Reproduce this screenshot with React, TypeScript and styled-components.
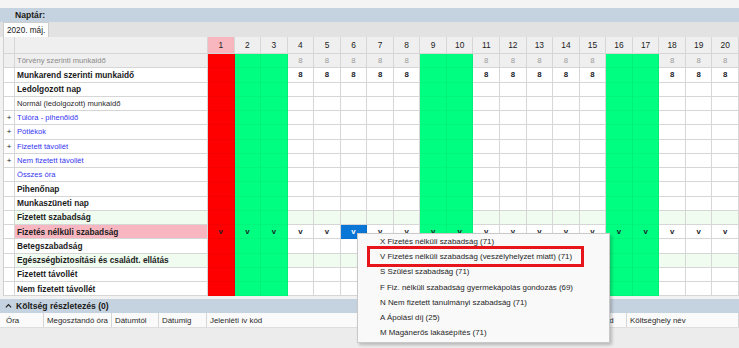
import React from "react";
import styled, { createGlobalStyle } from "styled-components";

const GlobalStyle = createGlobalStyle`
  html, body {
    margin: 0;
    padding: 0;
  }
  body {
    width: 739px;
    height: 348px;
    overflow: hidden;
    background: #f2f2f2;
    font-family: "Liberation Sans", Arial, sans-serif;
    color: #1b1b1b;
  }
`;

type DayKind = "holiday" | "weekend" | "work";
type Day = { n: number; kind: DayKind };

const days: Day[] = Array.from({ length: 20 }, (_, i) => {
  const n = i + 1;
  const kind: DayKind =
    n === 1 ? "holiday" : [2, 3, 9, 10, 16, 17].includes(n) ? "weekend" : "work";
  return { n, kind };
});

type RowKind = "law" | "bold" | "normal" | "link";
type Row = {
  label: string;
  kind: RowKind;
  plus?: boolean;
  tint?: "green" | "pink";
  values?: "law" | "schedule" | "v";
};

const rows: Row[] = [
  { label: "Törvény szerinti munkaidő", kind: "law", values: "law" },
  { label: "Munkarend szerinti munkaidő", kind: "bold", values: "schedule" },
  { label: "Ledolgozott nap", kind: "bold" },
  { label: "Normál (ledolgozott) munkaidő", kind: "normal" },
  { label: "Túlóra - pihenőidő", kind: "link", plus: true },
  { label: "Pótlékok", kind: "link", plus: true },
  { label: "Fizetett távollét", kind: "link", plus: true },
  { label: "Nem fizetett távollét", kind: "link", plus: true },
  { label: "Összes óra", kind: "link" },
  { label: "Pihenőnap", kind: "bold" },
  { label: "Munkaszüneti nap", kind: "bold" },
  { label: "Fizetett szabadság", kind: "bold", tint: "green" },
  { label: "Fizetés nélküli szabadság", kind: "bold", tint: "pink", values: "v" },
  { label: "Betegszabadság", kind: "bold" },
  { label: "Egészségbiztosítási és családt. ellátás", kind: "bold", tint: "green" },
  { label: "Fizetett távollét", kind: "bold" },
  { label: "Nem fizetett távollét", kind: "bold" },
];

const menuItems = [
  "X Fizetés nélküli szabadság (71)",
  "V Fizetés nélküli szabadság (veszélyhelyzet miatt) (71)",
  "S Szülési szabadság (71)",
  "F Fiz. nélküli szabadság gyermekápolás gondozás (69)",
  "N Nem fizetett tanulmányi szabadság (71)",
  "A Ápolási díj (25)",
  "M Magánerős lakásépítés (71)",
];

const costColumns = [
  { title: "Óra", width: 41 },
  { title: "Megosztandó óra", width: 68 },
  { title: "Dátumtól", width: 47 },
  { title: "Dátumig", width: 48 },
  { title: "Jelenléti ív kód", width: 348 },
  { title: "Költséghely kód", width: 72 },
  { title: "Költséghely név", width: 112 },
];

const SELECTED_DAY = 6;
const SELECTED_ROW = 12;

function cellBg(day: Day, row: Row): string {
  if (day.kind === "holiday") return "#ff0000";
  if (day.kind === "weekend") return "#00ff80";
  if (row.kind === "law") return "#efefef";
  if (row.tint === "green") return "#effcef";
  return "#ffffff";
}

function cellValue(day: Day, row: Row): string {
  if (row.values === "v") return "v";
  if (day.kind !== "work") return "";
  if (row.values === "law" || row.values === "schedule") return "8";
  return "";
}

export default function App() {
  return (
    <Page>
      <GlobalStyle />
      <TopStrip />
      <SectionBar>Naptár:</SectionBar>
      <TabBar>
        <Tab>2020. máj.</Tab>
      </TabBar>
      <Calendar>
        <HeaderCell />
        <HeaderCell />
        {days.map((d) => (
          <HeaderCell key={d.n} $holiday={d.kind === "holiday"}>
            {d.n}
          </HeaderCell>
        ))}
        {rows.map((row, r) => (
          <React.Fragment key={r}>
            <PlusCell $grey={row.kind === "law"}>{row.plus ? "+" : ""}</PlusCell>
            <LabelCell $kind={row.kind} $tint={row.tint}>
              {row.label}
            </LabelCell>
            {days.map((d) => {
              const selected = r === SELECTED_ROW && d.n === SELECTED_DAY;
              return (
                <DayCell
                  key={d.n}
                  $bg={selected ? "#0a76d6" : cellBg(d, row)}
                  $coloured={d.kind !== "work" || selected}
                  $muted={row.values === "law"}
                  $light={selected}
                >
                  {cellValue(d, row)}
                </DayCell>
              );
            })}
          </React.Fragment>
        ))}
      </Calendar>
      <Spacer />
      <SectionBar>
        <Chevron viewBox="0 0 8 6">
          <path d="M1 4.5 L4 1.5 L7 4.5" fill="none" stroke="#222" strokeWidth="1.4" />
        </Chevron>
        Költség részletezés (0)
      </SectionBar>
      <CostHeader>
        {costColumns.map((c) => (
          <CostColumn key={c.title} $width={c.width}>
            {c.title}
          </CostColumn>
        ))}
      </CostHeader>
      <EmptyArea />
      <Menu>
        {menuItems.map((item, i) => (
          <MenuItem key={item} $marked={i === 1}>
            {item}
          </MenuItem>
        ))}
      </Menu>
    </Page>
  );
}

const Page = styled.div`
  position: relative;
  width: 739px;
  height: 348px;
  overflow: hidden;
  display: flex;
  flex-direction: column;
`;

const TopStrip = styled.div`
  height: 8px;
  background: #f4f4f4;
  flex-shrink: 0;
`;

const SectionBar = styled.div`
  height: 14px;
  display: flex;
  align-items: center;
  gap: 4px;
  padding-left: 15px;
  background: #c5d2df;
  font-size: 8.6px;
  font-weight: bold;
  color: #1a1a1a;
  flex-shrink: 0;

  & + & {
    height: 17px;
  }
`;

const Chevron = styled.svg`
  width: 7px;
  height: 6px;
  margin-left: -10px;
`;

const TabBar = styled.div`
  height: 15px;
  display: flex;
  align-items: flex-end;
  padding-left: 3px;
  background: #e2e2e2;
  flex-shrink: 0;
`;

const Tab = styled.div`
  height: 14px;
  padding: 0 3px;
  display: flex;
  align-items: center;
  background: #ffffff;
  border: 1px solid #cdcdcd;
  border-bottom: none;
  font-size: 8.2px;
  color: #1a1a1a;
`;

const Calendar = styled.div`
  margin-left: 3px;
  display: grid;
  grid-template-columns: 11px 193px repeat(20, 1fr);
  grid-template-rows: 17px repeat(17, 14.25px);
  border-left: 1px solid #cfcfcf;
  background: #ffffff;
  flex-shrink: 0;
`;

const HeaderCell = styled.div<{ $holiday?: boolean }>`
  display: flex;
  align-items: center;
  justify-content: center;
  background: ${(p) => (p.$holiday ? "#f8b6bf" : "#efefef")};
  border-right: 1px solid #d6d6d6;
  border-bottom: 1px solid #d6d6d6;
  font-size: 8.4px;
  color: #222;
`;

const PlusCell = styled.div<{ $grey?: boolean }>`
  display: flex;
  align-items: center;
  justify-content: center;
  background: ${(p) => (p.$grey ? "#efefef" : "#ffffff")};
  border-right: 1px solid #d6d6d6;
  border-bottom: 1px solid #d6d6d6;
  font-size: 8px;
  color: #222;
`;

const labelColor = { law: "#8a8a8a", bold: "#1b1b1b", normal: "#2a2a2a", link: "#3535f2" };

const LabelCell = styled.div<{ $kind: RowKind; $tint?: "green" | "pink" }>`
  display: flex;
  align-items: center;
  padding-left: 2px;
  white-space: nowrap;
  overflow: hidden;
  background: ${(p) =>
    p.$tint === "pink"
      ? "#f8b7c0"
      : p.$tint === "green"
      ? "#effcef"
      : p.$kind === "law"
      ? "#efefef"
      : "#ffffff"};
  border-right: 1px solid #d6d6d6;
  border-bottom: 1px solid #d6d6d6;
  font-size: ${(p) => (p.$kind === "bold" ? "8.3px" : "7.6px")};
  font-weight: ${(p) => (p.$kind === "bold" ? "bold" : "normal")};
  color: ${(p) => labelColor[p.$kind]};
`;

const DayCell = styled.div<{ $bg: string; $coloured: boolean; $muted: boolean; $light: boolean }>`
  display: flex;
  align-items: center;
  justify-content: center;
  background: ${(p) => p.$bg};
  border-right: 1px solid ${(p) => (p.$coloured ? "rgba(0,0,0,0.06)" : "#d6d6d6")};
  border-bottom: 1px solid ${(p) => (p.$coloured ? "rgba(0,0,0,0.04)" : "#d6d6d6")};
  font-size: 7.8px;
  font-weight: ${(p) => (p.$muted ? "normal" : "bold")};
  color: ${(p) => (p.$light ? "#ffffff" : p.$muted ? "#9a9a9a" : "#1b1b2b")};
`;

const Spacer = styled.div`
  height: 3px;
  background: #f2f2f2;
  flex-shrink: 0;
`;

const CostHeader = styled.div`
  height: 14px;
  display: flex;
  padding-left: 3px;
  background: #fafafa;
  border-bottom: 1px solid #dedede;
  flex-shrink: 0;
`;

const CostColumn = styled.div<{ $width: number }>`
  width: ${(p) => p.$width}px;
  flex-shrink: 0;
  display: flex;
  align-items: center;
  padding-left: 3px;
  box-sizing: border-box;
  border-right: 1px solid #d6d6d6;
  font-size: 7.9px;
  color: #2a2a2a;
  white-space: nowrap;
  overflow: hidden;
`;

const EmptyArea = styled.div`
  flex: 1;
  background: #ececec;
`;

const Menu = styled.div`
  position: absolute;
  left: 357px;
  top: 233px;
  width: 253px;
  padding: 0 0 2px;
  background: #f9f9f9;
  border: 1px solid #c9c9c9;
  box-shadow: 2px 2px 3px rgba(0, 0, 0, 0.22);
  box-sizing: border-box;
`;

const MenuItem = styled.div<{ $marked?: boolean }>`
  height: 15.2px;
  display: flex;
  align-items: center;
  padding-left: 22px;
  font-size: 7.9px;
  color: #1f1f1f;
  white-space: nowrap;
  ${(p) =>
    p.$marked &&
    `
    margin: 0 28px 0 12px;
    padding-left: 10px;
    outline: 3px solid #e8141c;
  `}
`;
